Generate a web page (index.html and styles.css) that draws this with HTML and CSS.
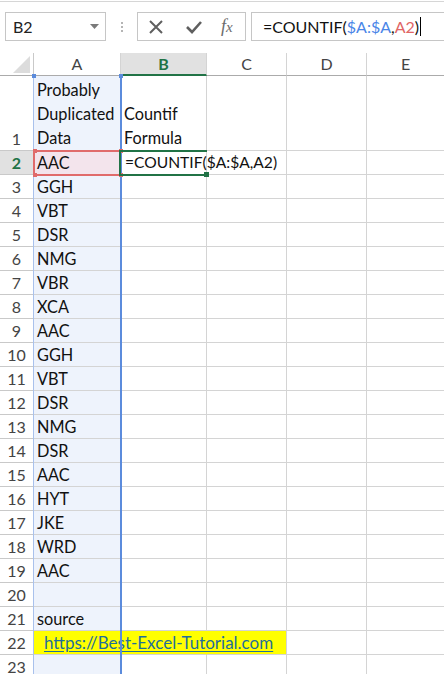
FILE: index.html
```html
<!DOCTYPE html>
<html>
<head>
<meta charset="utf-8">
<link rel="stylesheet" href="styles.css">
</head>
<body>
<div class="app">
  <div class="toolbar">
    <div class="namebox">
      <span class="name">B2</span>
      <svg class="dd" width="9" height="5" viewBox="0 0 9 5"><path d="M0 0 H9 L4.5 5 Z" fill="#7a7a7a"/></svg>
    </div>
    <div class="dots"><i></i><i></i><i></i></div>
    <div class="btns">
      <svg width="14" height="14" viewBox="0 0 14 14"><path d="M1 1 L13 13 M13 1 L1 13" stroke="#5f5f5f" stroke-width="2"/></svg>
      <svg width="16" height="14" viewBox="0 0 16 14"><path d="M1 7 L6 12 L15 2" stroke="#5f5f5f" stroke-width="2.6" fill="none"/></svg>
      <span class="fx">f<span class="x">x</span></span>
    </div>
    <div class="fbar"><span>=COUNTIF(</span><span class="blue">$A:$A</span><span>,</span><span class="red">A2</span><span>)</span><span class="caret"></span></div>
  </div>
  <div class="sheet">
    <div class="row hdr">
      <div class="c rh corner"><svg width="17" height="17" viewBox="0 0 17 17"><path d="M17 0 V17 H0 Z" fill="#dcdcdc"/></svg></div>
      <div class="c ca">A</div>
      <div class="c cb sel">B</div>
      <div class="c cc">C</div>
      <div class="c cd">D</div>
      <div class="c ce">E</div>
    </div>
    <div class="row r1">
      <div class="c rh rbot">1</div>
      <div class="c ca fillA wrap">Probably<br>Duplicated<br>Data</div>
      <div class="c cb wrap">Countif<br>Formula</div>
      <div class="c cc"></div><div class="c cd"></div><div class="c ce"></div>
    </div>
    <div class="row">
      <div class="c rh selr">2</div>
      <div class="c ca pink">AAC</div>
      <div class="c cb over">=COUNTIF($A:$A,A2)</div>
      <div class="c cc"></div><div class="c cd"></div><div class="c ce"></div>
    </div>
    <div class="row"><div class="c rh">3</div><div class="c ca fillA">GGH</div><div class="c cb"></div><div class="c cc"></div><div class="c cd"></div><div class="c ce"></div></div>
    <div class="row"><div class="c rh">4</div><div class="c ca fillA">VBT</div><div class="c cb"></div><div class="c cc"></div><div class="c cd"></div><div class="c ce"></div></div>
    <div class="row"><div class="c rh">5</div><div class="c ca fillA">DSR</div><div class="c cb"></div><div class="c cc"></div><div class="c cd"></div><div class="c ce"></div></div>
    <div class="row"><div class="c rh">6</div><div class="c ca fillA">NMG</div><div class="c cb"></div><div class="c cc"></div><div class="c cd"></div><div class="c ce"></div></div>
    <div class="row"><div class="c rh">7</div><div class="c ca fillA">VBR</div><div class="c cb"></div><div class="c cc"></div><div class="c cd"></div><div class="c ce"></div></div>
    <div class="row"><div class="c rh">8</div><div class="c ca fillA">XCA</div><div class="c cb"></div><div class="c cc"></div><div class="c cd"></div><div class="c ce"></div></div>
    <div class="row"><div class="c rh">9</div><div class="c ca fillA">AAC</div><div class="c cb"></div><div class="c cc"></div><div class="c cd"></div><div class="c ce"></div></div>
    <div class="row"><div class="c rh">10</div><div class="c ca fillA">GGH</div><div class="c cb"></div><div class="c cc"></div><div class="c cd"></div><div class="c ce"></div></div>
    <div class="row"><div class="c rh">11</div><div class="c ca fillA">VBT</div><div class="c cb"></div><div class="c cc"></div><div class="c cd"></div><div class="c ce"></div></div>
    <div class="row"><div class="c rh">12</div><div class="c ca fillA">DSR</div><div class="c cb"></div><div class="c cc"></div><div class="c cd"></div><div class="c ce"></div></div>
    <div class="row"><div class="c rh">13</div><div class="c ca fillA">NMG</div><div class="c cb"></div><div class="c cc"></div><div class="c cd"></div><div class="c ce"></div></div>
    <div class="row"><div class="c rh">14</div><div class="c ca fillA">DSR</div><div class="c cb"></div><div class="c cc"></div><div class="c cd"></div><div class="c ce"></div></div>
    <div class="row"><div class="c rh">15</div><div class="c ca fillA">AAC</div><div class="c cb"></div><div class="c cc"></div><div class="c cd"></div><div class="c ce"></div></div>
    <div class="row"><div class="c rh">16</div><div class="c ca fillA">HYT</div><div class="c cb"></div><div class="c cc"></div><div class="c cd"></div><div class="c ce"></div></div>
    <div class="row"><div class="c rh">17</div><div class="c ca fillA">JKE</div><div class="c cb"></div><div class="c cc"></div><div class="c cd"></div><div class="c ce"></div></div>
    <div class="row"><div class="c rh">18</div><div class="c ca fillA">WRD</div><div class="c cb"></div><div class="c cc"></div><div class="c cd"></div><div class="c ce"></div></div>
    <div class="row"><div class="c rh">19</div><div class="c ca fillA">AAC</div><div class="c cb"></div><div class="c cc"></div><div class="c cd"></div><div class="c ce"></div></div>
    <div class="row"><div class="c rh">20</div><div class="c ca fillA"></div><div class="c cb"></div><div class="c cc"></div><div class="c cd"></div><div class="c ce"></div></div>
    <div class="row"><div class="c rh">21</div><div class="c ca fillA">source</div><div class="c cb"></div><div class="c cc"></div><div class="c cd"></div><div class="c ce"></div></div>
    <div class="row r22">
      <div class="c rh">22</div>
      <div class="c ca yel link"><span class="lt">https://Best-Excel-Tutorial.com</span></div>
      <div class="c cb yel nb"></div><div class="c cc yel"></div><div class="c cd"></div><div class="c ce"></div>
    </div>
    <div class="row"><div class="c rh">23</div><div class="c ca fillA"></div><div class="c cb"></div><div class="c cc"></div><div class="c cd"></div><div class="c ce"></div></div>

    <div class="hl-blue"><i class="sq tl"></i><i class="sq tr"></i></div>
    <div class="hl-red"><i class="sq tl"></i><i class="sq tr"></i><i class="sq bl"></i><i class="sq br"></i></div>
    <div class="hl-green"><i class="sq br"></i></div>
  </div>
</div>
</body>
</html>
```

FILE: styles.css
```css
html, body { margin: 0; padding: 0; background: #fff; }
body { width: 444px; height: 674px; overflow: hidden; font-family: Lato, "Open Sans", sans-serif; }
.app { width: 444px; height: 674px; overflow: hidden; }

.toolbar {
  height: 52px; box-sizing: border-box; border-top: 1px solid #d6d6d6; margin-top: 1px;
  display: flex; align-items: flex-start; padding-top: 10px; padding-left: 5px;
}
.namebox {
  width: 101px; height: 29px; box-sizing: border-box; border: 1px solid #c6c6c6;
  display: flex; align-items: center; justify-content: space-between; padding: 0 6px 0 7px;
}
.name { font-size: 16px; color: #222; }
.dots { width: 30px; height: 29px; display: flex; flex-direction: column; align-items: center; justify-content: center; gap: 2px; margin-left: 1px; }
.dots i { width: 2px; height: 2px; background: #b5b5b5; display: block; }
.btns {
  width: 109px; height: 29px; box-sizing: border-box; border: 1px solid #c6c6c6;
  display: flex; align-items: center; padding-left: 11px; gap: 23px;
}
.fx { font-family: "Liberation Serif", serif; font-style: italic; font-size: 18px; color: #6b6b6b; margin-left: -4px; }
.fx .x { font-size: 15px; }
.fbar {
  flex: 1; height: 29px; box-sizing: border-box; border: 1px solid #c6c6c6; border-right: none; margin-left: 5px;
  display: flex; align-items: center; padding-left: 11px; font-size: 16px; color: #111;
}
.blue { color: #4a86e8; }
.red { color: #e06666; }
.caret { width: 1px; height: 19px; background: #000; margin-left: 1px; }

.sheet { position: relative; }
.row { display: flex; height: 24px; }
.row.hdr { height: 23px; }
.row.r1 { height: 75px; }
.c {
  box-sizing: border-box; border-right: 1px solid #d4d4d4; border-bottom: 1px solid #d4d4d4;
  font-size: 16.3px; color: #111; padding-left: 3px; line-height: 23px; white-space: nowrap;
}
.rh { width: 34px; text-align: center; padding: 0; color: #444; border-color: #c9c9c9; font-size: 16px; }
.rh.rbot { display: flex; align-items: flex-end; justify-content: center; }
.ca { width: 87px; }
.cb { width: 86px; }
.cc { width: 80px; }
.cd { width: 80px; }
.ce { flex: 1; border-right: none; }

.hdr .c { text-align: center; padding: 0; color: #444; border-bottom-color: #ababab; line-height: 22px; font-size: 16px; }
.hdr .c.corner { display: flex; align-items: flex-end; justify-content: flex-end; padding: 0 3px 2px 0; }
.hdr .sel { background: #e1e1e1; color: #217346; font-weight: bold; border-bottom: 2px solid #217346; }
.rh.selr { background: #e1e1e1; color: #217346; font-weight: bold; }

.wrap { white-space: normal; line-height: 24px; display: flex; flex-direction: column; justify-content: flex-end; padding-bottom: 0; }
.fillA { background: #eef3fc; }
.pink { background: #f3e4ec; }
.over { overflow: visible; position: relative; z-index: 2; padding-left: 4px; font-size: 15.6px; }
.yel { background: #ffff00; }
.nb { border-right-color: #ffff00; }
.ca.yel { border-right-color: #ffff00; }
.link { overflow: visible; position: relative; z-index: 2; padding-left: 10px; }
.lt { color: #1f6f9a; text-decoration: underline; text-underline-offset: 2px; font-size: 17px; }

.hl-blue {
  position: absolute; left: 33px; top: 23px; width: 89px; height: 600px; box-sizing: border-box;
  border-left: 1px solid #a9c1ec; border-right: 2px solid #5b8bdc; z-index: 3; pointer-events: none;
}
.hl-red {
  position: absolute; left: 33px; top: 97px; width: 88px; height: 26px; box-sizing: border-box;
  border: 2px solid #e06b6b; border-right: none; z-index: 4;
}
.hl-green {
  position: absolute; left: 119px; top: 97px; width: 88px; height: 26px; box-sizing: border-box;
  border: 2px solid #217346; border-right: none; z-index: 4;
}
.sq { position: absolute; width: 4px; height: 4px; display: block; }
.hl-blue .sq { background: #5b8bdc; top: -2px; }
.hl-blue .tl { left: -2px; }
.hl-blue .tr { right: -3px; }
.hl-red .sq { background: #e06b6b; }
.hl-red .tl { left: -2px; top: -3px; }
.hl-red .tr { right: -2px; top: -3px; }
.hl-red .bl { left: -2px; bottom: -3px; }
.hl-red .br { right: -2px; bottom: -3px; }
.hl-green .br { background: #217346; width: 5px; height: 5px; right: -2px; bottom: -3px; }
```
